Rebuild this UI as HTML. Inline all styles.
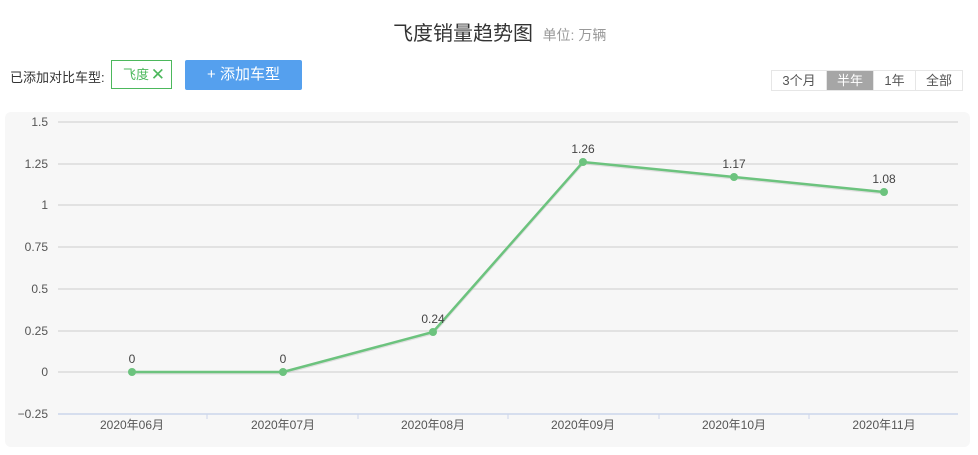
<!DOCTYPE html>
<html><head><meta charset="utf-8"><style>
body{margin:0;width:978px;height:455px;background:#fff;font-family:"Liberation Sans","Noto Sans CJK SC",sans-serif;position:relative;overflow:hidden}
.t{position:absolute;left:393px;top:17px;font-size:20px;color:#333}
.t span{font-size:14px;color:#999;margin-left:4px}
.lab{position:absolute;left:10px;top:67px;font-size:13px;color:#333}
.tag{position:absolute;left:111px;top:60px;width:61px;height:29px;border:1px solid #4cb85c;box-sizing:border-box;font-size:13px;color:#4cb85c;line-height:27px;padding-left:11px}
.tag b{position:absolute;right:6px;top:0;font-weight:normal;font-size:17px;color:#4cb85c}
.btn{position:absolute;left:185px;top:60px;width:117px;height:30px;background:#55a0ee;border-radius:2px;color:#fff;font-size:15px;text-align:center;line-height:30px}
.tabs{position:absolute;left:771px;top:70px;display:flex;border:1px solid #e6e6e6;height:19px}
.tabs div{font-size:13px;color:#555;line-height:19px;text-align:center;border-right:1px solid #e6e6e6}
.tabs div:last-child{border-right:none}
.chart{position:absolute;left:5px;top:112px;width:965px;height:335px;background:#f7f7f7;border-radius:6px}
svg{position:absolute;left:0;top:0}
</style></head><body>
<div class="t">飞度销量趋势图 <span>单位: 万辆</span></div>
<div class="lab">已添加对比车型:</div>
<div class="tag">飞度<b>✕</b></div>
<div class="btn">+ 添加车型</div>
<div class="tabs"><div style="width:54px">3个月</div><div style="width:46px;background:#a6a6a6;color:#fff">半年</div><div style="width:41px">1年</div><div style="width:46px">全部</div></div>
<div class="chart"></div>
<svg width="978" height="455" font-family="Liberation Sans, Noto Sans CJK SC, sans-serif" font-size="12">
<g stroke="#dcdcdc" stroke-width="1.5">
<line x1="58" x2="958" y1="122" y2="122"/><line x1="58" x2="958" y1="164" y2="164"/><line x1="58" x2="958" y1="205" y2="205"/><line x1="58" x2="958" y1="247" y2="247"/><line x1="58" x2="958" y1="289" y2="289"/><line x1="58" x2="958" y1="331" y2="331"/><line x1="58" x2="958" y1="372" y2="372"/>
</g>
<line x1="58" x2="958" y1="414" y2="414" stroke="#ccd6eb" stroke-width="1.5"/>
<g stroke="#ccd6eb"><line x1="207" x2="207" y1="414" y2="419"/><line x1="358" x2="358" y1="414" y2="419"/><line x1="508" x2="508" y1="414" y2="419"/><line x1="659" x2="659" y1="414" y2="419"/><line x1="809" x2="809" y1="414" y2="419"/></g>
<g fill="#555" text-anchor="end">
<text x="48" y="126">1.5</text><text x="48" y="168">1.25</text><text x="48" y="209">1</text><text x="48" y="251">0.75</text><text x="48" y="293">0.5</text><text x="48" y="335">0.25</text><text x="48" y="376">0</text><text x="48" y="418">−0.25</text>
</g>
<g fill="#555" text-anchor="middle">
<text x="132" y="429">2020年06月</text><text x="283" y="429">2020年07月</text><text x="433" y="429">2020年08月</text><text x="583" y="429">2020年09月</text><text x="734" y="429">2020年10月</text><text x="884" y="429">2020年11月</text>
</g>
<polyline points="132,373 283,373 433,333 583,163 734,178 884,193" fill="none" stroke="#bbb" stroke-opacity=".4" stroke-width="3"/>
<polyline points="132,372 283,372 433,332 583,162 734,177 884,192" fill="none" stroke="#6cc37e" stroke-width="2.5"/>
<g fill="#6cc37e"><circle cx="132" cy="372" r="4"/><circle cx="283" cy="372" r="4"/><circle cx="433" cy="332" r="4"/><circle cx="583" cy="162" r="4"/><circle cx="734" cy="177" r="4"/><circle cx="884" cy="192" r="4"/></g>
<g fill="#444" text-anchor="middle">
<text x="132" y="363">0</text><text x="283" y="363">0</text><text x="433" y="323">0.24</text><text x="583" y="153">1.26</text><text x="734" y="168">1.17</text><text x="884" y="183">1.08</text>
</g>
</svg>
</body></html>
